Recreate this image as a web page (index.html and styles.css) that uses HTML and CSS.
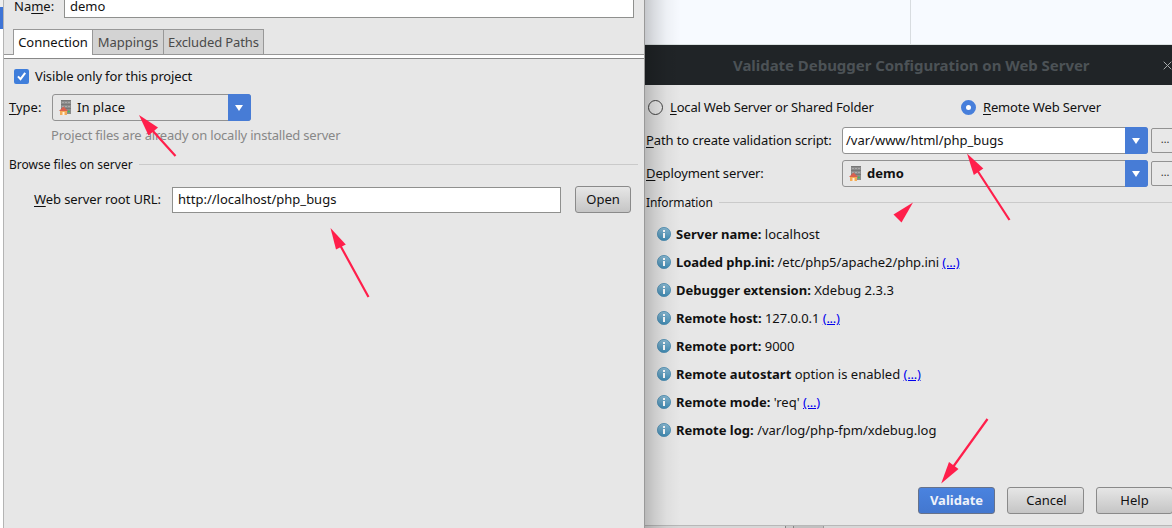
FILE: index.html
```html
<!DOCTYPE html>
<html lang="en">
<head>
<meta charset="utf-8">
<title>Validate Debugger Configuration on Web Server</title>
<link rel="stylesheet" href="styles.css">
</head>
<body>
<svg width="0" height="0" class="defs">
  <defs>
    <linearGradient id="blue" x1="0" y1="0" x2="0" y2="1"><stop offset="0" stop-color="#8bb9d2"/><stop offset="1" stop-color="#3f8bb4"/></linearGradient>
    <symbol id="info" viewBox="0 0 14 14">
      <circle cx="7" cy="7" r="6.6" fill="url(#blue)" stroke="#4a8db2" stroke-width=".8"/>
      <path d="M6 3h2v2H6zM6 6h2v5H6z" fill="#fff"/>
    </symbol>
    <symbol id="server" viewBox="0 0 13 15">
      <path d="M2 0h10v14H2z" fill="#8c8c8c"/>
      <path d="M2 .5h10M2 4.5h10M2 8.5h10" stroke="#777"/>
      <path d="M3 2.5h8M3 6.5h8" stroke="#aaa" stroke-dasharray="2 1"/>
      <path d="M1 10h7v5H1z" fill="#f4ab55"/>
      <path d="M3.5 12h2v3h-2z" fill="#fff1dc"/>
      <path d="M0 11l4.5-4.5L9 11z" fill="#d9604f"/>
      <circle cx="9.8" cy="11.5" r="1.1" fill="#42b85a"/>
    </symbol>
  </defs>
</svg>
<main class="screen">
  <div class="edge"><span></span></div>
  <section class="settings">
    <div class="name-row"><label>Na<u>m</u>e:</label><div class="field name-field">demo</div></div>
    <div class="tabs"><span class="tab active">Connection</span><span class="tab mappings">Mappings</span><span class="tab excluded">Excluded Paths</span></div>
    <div class="tab-line"></div>
    <div class="check-row">
      <svg width="15" height="15" viewBox="0 0 15 15"><rect width="15" height="15" rx="2" fill="#3f7edb"/><path d="M4 7.4l2.5 2.8 4.7-6.3" fill="none" stroke="#fff" stroke-width="2"/></svg>
      <span class="visible-label">Visible only for this project</span>
    </div>
    <div class="type-row"><label><u>T</u>ype:</label>
      <div class="combo"><svg class="srv" width="13" height="15"><use href="#server"/></svg><span class="value">In place</span><i class="drop"></i></div>
    </div>
    <p class="hint">Project files are already on locally installed server</p>
    <div class="group browse"><span>Browse files on server</span><hr></div>
    <div class="url-row"><label><u>W</u>eb server root URL:</label><div class="field url-field">http://localhost/php_bugs</div><button class="btn open">Open</button></div>
  </section>
  <section class="right">
    <div class="backdrop"><span></span></div>
    <header class="title"><h1>Validate Debugger Configuration on Web Server</h1>
      <svg width="9" height="9" viewBox="0 0 9 9"><path d="M.7.7l7.6 7.6M8.3.7L.7 8.3" stroke="#a5a9ab" stroke-width="1"/></svg></header>
    <div class="radios">
      <span class="radio"></span><span class="local"><u>L</u>ocal Web Server or Shared Folder</span>
      <span class="radio on"></span><span class="remote"><u>R</u>emote Web Server</span>
    </div>
    <div class="form-row"><label><u>P</u>ath to create validation script:</label><div class="combo editable"><span class="value">/var/www/html/php_bugs</span><i class="drop"></i></div><button class="more">…</button></div>
    <div class="form-row"><label><u>D</u>eployment server:</label><div class="combo"><svg class="srv" width="13" height="15"><use href="#server"/></svg><b class="value">demo</b><i class="drop"></i></div><button class="more">…</button></div>
    <div class="group information"><span>Information</span><hr></div>
    <ul class="messages">
      <li><svg width="14" height="14"><use href="#info"/></svg><p><b>Server name:</b> localhost</p></li>
      <li><svg width="14" height="14"><use href="#info"/></svg><p class="snug"><b>Loaded php.ini:</b> /etc/php5/apache2/php.ini <a>(...)</a></p></li>
      <li><svg width="14" height="14"><use href="#info"/></svg><p><b>Debugger extension:</b> Xdebug 2.3.3</p></li>
      <li><svg width="14" height="14"><use href="#info"/></svg><p class="snug"><b>Remote host:</b> 127.0.0.1 <a>(...)</a></p></li>
      <li><svg width="14" height="14"><use href="#info"/></svg><p><b>Remote port:</b> 9000</p></li>
      <li><svg width="14" height="14"><use href="#info"/></svg><p><b>Remote autostart</b> option is enabled <a>(...)</a></p></li>
      <li><svg width="14" height="14"><use href="#info"/></svg><p><b>Remote mode:</b> 'req' <a>(...)</a></p></li>
      <li><svg width="14" height="14"><use href="#info"/></svg><p><b>Remote log:</b> /var/log/php-fpm/xdebug.log</p></li>
    </ul>
    <div class="actions"><button class="btn primary">Validate</button><button class="btn cancel">Cancel</button><button class="btn">Help</button></div>
    <footer class="under"><span class="split"></span><span class="cell"></span></footer>
    <div class="shadow"></div>
  </section>
</main>
<svg class="arrows" width="1172" height="528" viewBox="0 0 1172 528">
  <g fill="#ff1f4b" stroke="none">
    <path d="M139 115L158 127.5L148.5 135.5Z"/>
    <path d="M330.5 228L345.8 244.5L336 249.5Z"/>
    <path d="M967 153.5L983.3 168.5L973.8 175Z"/>
    <path d="M913 202.5L893.5 214.5L901.5 222.5Z"/>
    <path d="M941.2 483.5L949 462L958.5 469Z"/>
  </g>
  <path d="M152 130L175.5 156M340 245L368.5 297M977 170L1009.5 220M953 467L987.5 419" stroke="#ff1f4b" stroke-width="2.2" fill="none"/>
</svg>
</body>
</html>
```
FILE: styles.css
```css
* { box-sizing: border-box; }
body { margin: 0; width: 1172px; height: 528px; overflow: hidden; font: 13px/18px "Noto Sans", sans-serif; color: #111; background: #e7e7e7; }
.defs { position: absolute; }
p, h1, ul, hr { margin: 0; padding: 0; }
button { font: inherit; color: inherit; padding: 0; }
u { text-decoration: underline; text-underline-offset: 2px; text-decoration-thickness: 1px; }
.screen { display: flex; height: 528px; overflow: hidden; }
.edge { width: 3px; flex: none; background: #fff; border-top: 7px solid #eee; }
.edge span { display: block; height: 22px; background: #3e74d6; }
.settings { width: 642px; flex: none; border-left: 1px solid #b4b4b4; border-right: 1px solid #999; overflow: hidden; }
.name-row { display: flex; height: 18px; padding-left: 10px; }
.name-row label { width: 50px; line-height: 12px; }
.field { background: #fff; border: 1px solid #8f908e; padding-left: 5px; height: 26px; line-height: 23px; }
.name-row .name-field { width: 570px; height: 18px; border-top: 0; line-height: 12px; }
.tabs { display: flex; margin: 11px 0 0 9px; height: 25px; }
.tab { border: 1px solid #989898; border-bottom: 0; border-left-width: 0; background: #d3d3d3; color: #4a4a4a; line-height: 25px; text-align: center; white-space: nowrap; }
.tab.active { width: 80px; border-left-width: 1px; background: #fff; color: #111; height: 26px; position: relative; }
.mappings { width: 71px; }
.excluded { width: 100px; letter-spacing: -.1px; }
.tab-line { height: 5px; background: #fff; border-top: 1px solid #989898; border-bottom: 1px solid #888; }
.check-row { display: flex; align-items: center; gap: 6px; height: 18px; margin: 8px 0 0 10px; }
.visible-label { letter-spacing: -.15px; }
.type-row { display: flex; align-items: center; margin: 9px 0 0 5px; }
.type-row label { width: 43px; padding-bottom: 2px; }
.type-row .combo { width: 199px; }
.combo { display: flex; align-items: center; height: 27px; border: 1px solid #929292; border-radius: 3px; padding-left: 6px; }
.combo .value { flex: 1; margin-left: 5px; padding-bottom: 2px; }
.srv { flex: none; }
.drop { width: 23px; height: 27px; margin: -1px; background: #477cd6; border-radius: 0 3px 3px 0; flex: none; display: grid; place-items: center; padding-right: 2px; }
.drop::after { content: ""; border: 4px solid transparent; border-top: 6px solid #fff; border-bottom: 0; }
.hint { margin: 5px 0 0 47px; color: #888; letter-spacing: -.19px; }
.group { display: flex; align-items: center; font-size: 12px; }
.group span { padding-top: 1px; margin-bottom: -1px; }
.group hr { flex: 1; border: 0; height: 1px; background: #cacaca; }
.browse { margin: 11px 6px 0 5px; gap: 6px; }
.url-row { display: flex; align-items: center; margin: 13px 0 0 30px; }
.url-row label { width: 138px; padding-bottom: 2px; letter-spacing: -.1px; }
.url-field { width: 389px; margin-right: 14px; }
.btn { border: 1px solid #8a8a8a; border-radius: 3px; background: linear-gradient(#e6e6e6, #c5c5c5); height: 27px; width: 77px; flex: none; line-height: 25px; }
.open { width: 56px; }
.right { position: relative; flex: 1; min-width: 0; overflow: hidden; }
.backdrop { height: 45px; background: #f7faff; border-bottom: 1px solid #dbe2e2; }
.backdrop span { display: block; width: 266px; height: 44px; border-right: 1px solid #d8dce0; }
.title { height: 40px; background: #202427; display: flex; align-items: center; padding-left: 88px; }
.title h1 { font-size: 15px; line-height: 22px; font-weight: 700; color: #4c5256; white-space: nowrap; width: 430px; flex: none; letter-spacing: -.04px; }
.title svg { flex: none; }
.radios { display: flex; align-items: center; height: 18px; margin: 13px 0 0 3px; }
.radio { width: 15px; height: 15px; border: 1px solid #444; border-radius: 50%; background: #ececec; margin-right: 7px; flex: none; }
.radio.on { border: 5px solid #477fdb; background: #fff; }
.local { width: 291px; letter-spacing: -.18px; }
.remote { letter-spacing: -.15px; }
.form-row { display: flex; align-items: center; height: 27px; margin: 11px 0 0 1px; }
.form-row + .form-row { margin-top: 6px; }
.form-row label { width: 196px; flex: none; padding-bottom: 2px; letter-spacing: -.11px; }
.form-row .combo { width: 306px; flex: none; margin-right: 3px; }
.form-row .editable { background: #fff; padding-left: 0; }
.editable .value { margin-left: 3px; }
.more { width: 28px; height: 25px; flex: none; border: 1px solid #929292; border-radius: 2px; background: #e8e8e8; font-size: 11px; line-height: 17px; padding-bottom: 5px; color: #333; }
.information { margin: 6px 0 0 1px; gap: 6px; }
.information span { letter-spacing: -.1px; }
.messages { list-style: none; margin: 9px 0 0 12px; }
.messages li { height: 28px; display: flex; align-items: center; gap: 5px; }
.messages a { color: #0000ee; text-decoration: underline; letter-spacing: -.25px; }
.messages .snug { letter-spacing: -.06px; }
.actions { display: flex; gap: 12px; margin: 43px 0 0 273px; }
.primary { background: linear-gradient(#4a83df, #4377cf); border-color: #67728a; color: #eef2fa; font-weight: 700; }
.cancel { padding-left: 2px; }
.under { display: flex; height: 3px; margin-top: 11px; background: #d7d7d7; border-top: 1px solid #b8b8b8; }
.under .split { width: 9px; margin-left: 140px; background: #c9c9c9; border: solid #858585; border-width: 0 1px; }
.under .cell { width: 30px; background: #c0c0c0; border-right: 1px solid #999; }
.shadow { position: absolute; left: 0; top: 0; width: 36px; height: 528px; background: linear-gradient(90deg, rgba(0,0,0,.2), rgba(0,0,0,.12) 25%, rgba(0,0,0,.04) 60%, transparent); }
.arrows { position: absolute; left: 0; top: 0; }
```
